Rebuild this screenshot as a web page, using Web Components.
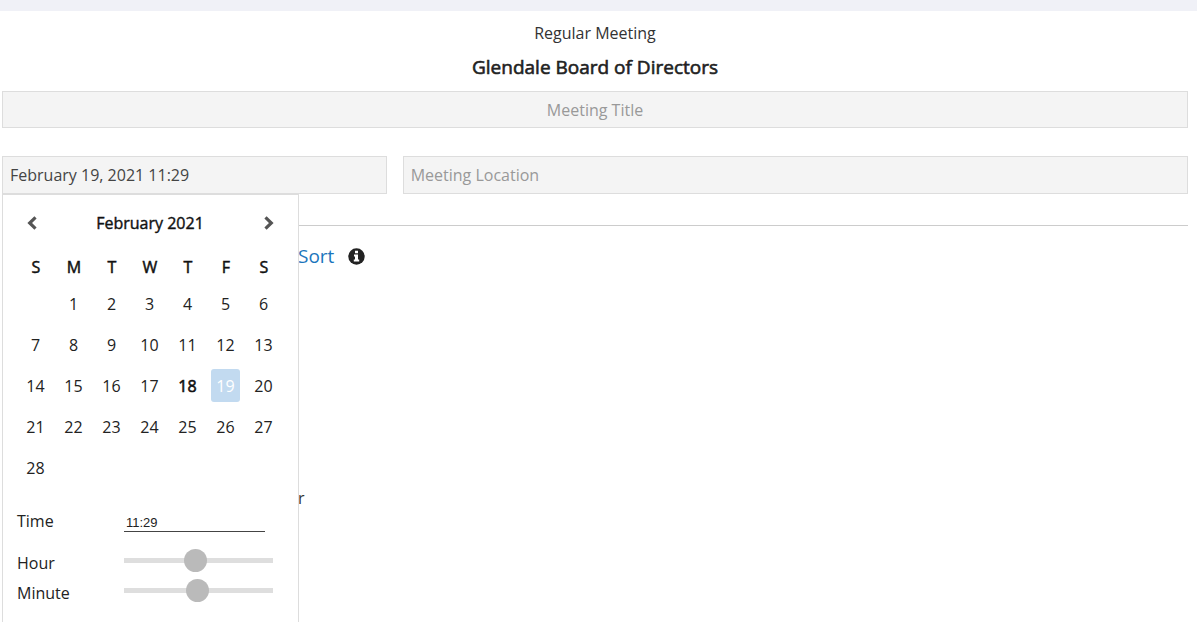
<!DOCTYPE html>
<html lang="en">
<head>
<meta charset="utf-8">
<title>Regular Meeting</title>
<style>
  html {
    overflow: hidden;
  }
  body {
    margin: 0;
    background: #fff;
    color: #333;
    font-family: "Open Sans", "Noto Sans", sans-serif;
    font-size: 16px;
    line-height: 24px;
  }
</style>
</head>
<body>
<meeting-page>
  <meeting-heading slot="heading" kind="Regular Meeting">Glendale Board of Directors</meeting-heading>
  <text-field slot="title" label="Meeting Title" centered></text-field>
  <date-field slot="details" value="February 19, 2021 11:29">
    <date-picker year="2021" month="2" selected="19" today="18" hour="11" minute="29"></date-picker>
  </date-field>
  <text-field slot="details" label="Meeting Location" tall></text-field>
  <agenda-tools slot="agenda">Sort</agenda-tools>
  <agenda-item slot="agenda">r</agenda-item>
</meeting-page>

<script>
class MeetingPage extends HTMLElement {
  constructor() {
    super();
    this.attachShadow({ mode: "open" });
    this.shadowRoot.innerHTML = `
    <style>
      :host {
        display: block;
        min-height: 100vh;
        box-sizing: border-box;
        border-top: 11px solid #f0f1f7;
      }
      main {
        display: flex;
        flex-direction: column;
        padding: 10px 9px 0 2px;
      }
      .details {
        display: flex;
        gap: 16px;
        margin-top: 28px;
      }
      ::slotted(date-field) {
        flex: 0 0 calc((100% + 16px) / 3 - 16px);
      }
      .details ::slotted(text-field) {
        flex: 1;
      }
      hr {
        width: 100%;
        margin: 31px 0 17px;
        border: 0;
        border-top: 1px solid #ccc;
      }
      .agenda {
        display: flex;
        flex-direction: column;
        gap: 217px;
        padding-left: 296px;
      }
    </style>
    <main>
      <slot name="heading"></slot>
      <slot name="title"></slot>
      <div class="details"><slot name="details"></slot></div>
      <hr>
      <div class="agenda"><slot name="agenda"></slot></div>
    </main>
    `;
  }
}

class MeetingHeading extends HTMLElement {
  constructor() {
    super();
    this.attachShadow({ mode: "open" });
    this.shadowRoot.innerHTML = `
    <style>
      :host {
        display: block;
        text-align: center;
        margin-bottom: 11px;
      }
      p {
        margin: 0;
      }
      h1 {
        margin: 9px 0 0;
        color: #222;
        font-size: 19px;
        line-height: 26px;
        font-weight: 400;
        -webkit-text-stroke: 0.6px currentColor;
      }
    </style>
    <p></p>
    <h1><slot></slot></h1>
    `;
  }

  connectedCallback() {
    this.shadowRoot.querySelector("p").textContent = this.getAttribute("kind");
  }
}

class TextField extends HTMLElement {
  constructor() {
    super();
    this.attachShadow({ mode: "open" });
    this.shadowRoot.innerHTML = `
    <style>
      :host {
        display: block;
      }
      input {
        display: block;
        width: 100%;
        height: 37px;
        box-sizing: border-box;
        margin: 0;
        padding: 0 7px;
        border: 1px solid #ddd;
        border-radius: 0;
        background: #f4f4f4;
        color: #444;
        font: inherit;
      }
      :host([centered]) input {
        text-align: center;
      }
      :host([tall]) input {
        height: 38px;
      }
      input::placeholder {
        color: #999;
        opacity: 1;
      }
    </style>
    <input type="text">
    `;
  }

  connectedCallback() {
    const input = this.shadowRoot.querySelector("input");
    input.placeholder = this.getAttribute("label");
    input.setAttribute("aria-label", this.getAttribute("label"));
  }
}

class DateField extends HTMLElement {
  constructor() {
    super();
    this.attachShadow({ mode: "open" });
    this.shadowRoot.innerHTML = `
    <style>
      :host {
        display: block;
        position: relative;
      }
      input {
        display: block;
        width: 100%;
        height: 38px;
        box-sizing: border-box;
        margin: 0;
        padding: 0 7px;
        border: 1px solid #ddd;
        border-radius: 0;
        background: #f4f4f4;
        color: #444;
        font: inherit;
      }
      ::slotted(date-picker) {
        position: absolute;
        top: 100%;
        left: 0;
        z-index: 10;
      }
    </style>
    <input type="text" aria-label="Meeting date">
    <slot></slot>
    `;
  }

  connectedCallback() {
    this.shadowRoot.querySelector("input").value = this.getAttribute("value");
  }
}

class DatePicker extends HTMLElement {
  constructor() {
    super();
    this.attachShadow({ mode: "open" });
    this.shadowRoot.innerHTML = `
    <style>
      :host {
        display: block;
        width: 297px;
        box-sizing: border-box;
        padding: 13px 15px 14px 14px;
        border: 1px solid #ddd;
        background: #fff;
        color: #222;
      }
      header {
        display: flex;
        align-items: center;
        justify-content: space-between;
        height: 30px;
      }
      h2 {
        margin: 0;
        color: #111;
        font-size: 16px;
        font-weight: 400;
        -webkit-text-stroke: 0.4px currentColor;
      }
      button {
        display: flex;
        align-items: center;
        justify-content: center;
        width: 29px;
        height: 33px;
        margin: 0 4px;
        padding: 0;
        border: 0;
        border-radius: 3px;
        background: none;
        color: inherit;
        font: inherit;
        cursor: pointer;
      }
      header button {
        margin: 0;
        color: #555;
      }
      table {
        width: 100%;
        margin-top: 13px;
        border-collapse: collapse;
        table-layout: fixed;
      }
      th {
        height: 32px;
        padding: 0;
        color: #111;
        font-weight: 400;
        -webkit-text-stroke: 0.5px currentColor;
      }
      td {
        height: 41px;
        padding: 0;
      }
      .today {
        color: #111;
        -webkit-text-stroke: 0.6px currentColor;
      }
      .selected {
        background: #c2daf0;
        color: #fff;
      }
      time-controls {
        margin-top: 18px;
      }
    </style>
    <header>
      <button type="button" aria-label="Previous month">
        <svg width="16" height="16" viewBox="0 0 16 16" fill="none" stroke="currentColor" stroke-width="3.2"><path d="M11.5 2.4 5.7 8l5.8 5.6"/></svg>
      </button>
      <h2></h2>
      <button type="button" aria-label="Next month">
        <svg width="16" height="16" viewBox="0 0 16 16" fill="none" stroke="currentColor" stroke-width="3.2"><path d="M5.5 2.4 11.3 8l-5.8 5.6"/></svg>
      </button>
    </header>
    <table>
      <thead><tr></tr></thead>
      <tbody></tbody>
    </table>
    <time-controls></time-controls>
    `;
  }

  connectedCallback() {
    const year = Number(this.getAttribute("year"));
    const month = Number(this.getAttribute("month")) - 1;
    const first = new Date(year, month, 1);
    const name = first.toLocaleString("en-US", { month: "long" });
    this.shadowRoot.querySelector("h2").textContent = name + " " + year;
    this.shadowRoot.querySelector("thead tr").innerHTML = [..."SMTWTFS"]
      .map((day) => `<th scope="col">${day}</th>`)
      .join("");
    this._renderDays(first.getDay(), new Date(year, month + 1, 0).getDate());

    const time = this.shadowRoot.querySelector("time-controls");
    time.setTime(this.getAttribute("hour"), this.getAttribute("minute"));
  }

  _renderDays(offset, count) {
    const body = this.shadowRoot.querySelector("tbody");
    let row;
    for (let i = 0; i < offset + count; i++) {
      if (i % 7 === 0) row = body.insertRow();
      const cell = row.insertCell();
      if (i < offset) continue;
      const day = String(i - offset + 1);
      const button = document.createElement("button");
      button.type = "button";
      button.textContent = day;
      if (day === this.getAttribute("today")) button.className = "today";
      if (day === this.getAttribute("selected")) button.className = "selected";
      cell.appendChild(button);
    }
  }
}

class TimeControls extends HTMLElement {
  constructor() {
    super();
    this.attachShadow({ mode: "open" });
    this.shadowRoot.innerHTML = `
    <style>
      :host {
        display: grid;
        grid-template-columns: 107px 1fr;
        grid-template-rows: 42px;
        grid-auto-rows: 30px;
        align-items: center;
        padding-right: 10px;
      }
      label[for="time"] {
        margin-bottom: 12px;
      }
      input {
        box-sizing: border-box;
        margin: 0;
      }
      input[type="text"] {
        width: 141px;
        height: 20px;
        margin-bottom: 10px;
        padding: 2px 2px 0;
        border: 0;
        border-bottom: 1px solid #444;
        background: none;
        color: #222;
        font: 13px/17px "Liberation Sans", Arial, sans-serif;
      }
      input[type="range"] {
        appearance: none;
        width: 100%;
        height: 23px;
        margin-bottom: 6px;
        background: none;
      }
      input::-webkit-slider-runnable-track {
        height: 5px;
        background: #dedede;
      }
      input::-webkit-slider-thumb {
        appearance: none;
        width: 23px;
        height: 23px;
        margin-top: -9px;
        border-radius: 50%;
        background: #bababa;
      }
    </style>
    <label for="time">Time</label>
    <input id="time" type="text">
    <label for="hour">Hour</label>
    <input id="hour" type="range" min="0" max="23">
    <label for="minute">Minute</label>
    <input id="minute" type="range" min="0" max="59">
    `;
    this._time = this.shadowRoot.querySelector("#time");
    this._hour = this.shadowRoot.querySelector("#hour");
    this._minute = this.shadowRoot.querySelector("#minute");
  }

  connectedCallback() {
    this._hour.addEventListener("input", this._updateTime.bind(this));
    this._minute.addEventListener("input", this._updateTime.bind(this));
  }

  setTime(hour, minute) {
    this._hour.value = hour;
    this._minute.value = minute;
    this._updateTime();
  }

  _updateTime() {
    this._time.value = this._hour.value + ":" + this._minute.value.padStart(2, "0");
  }
}

class AgendaTools extends HTMLElement {
  constructor() {
    super();
    this.attachShadow({ mode: "open" });
    this.shadowRoot.innerHTML = `
    <style>
      :host {
        display: flex;
        align-items: center;
        gap: 14px;
        height: 26px;
        font-size: 19px;
      }
      a {
        color: #1b75bc;
        text-decoration: none;
      }
      svg {
        display: block;
      }
    </style>
    <a href="#sort"><slot></slot></a>
    <svg width="17" height="17" viewBox="0 0 17 17" role="img" aria-label="Help">
      <circle cx="8.5" cy="8.5" r="8.2" fill="#222"/>
      <path fill="#fff" d="M7 2.8h3v2.4H7zM6 6.6h4v5h1.2v2H5.8v-2H7v-3H6z"/>
    </svg>
    `;
  }
}

class AgendaItem extends HTMLElement {
  constructor() {
    super();
    this.attachShadow({ mode: "open" });
    this.shadowRoot.innerHTML = `
    <style>
      :host {
        display: block;
      }
    </style>
    <slot></slot>
    `;
  }
}

// time-controls goes first, date-picker calls setTime on it
customElements.define("time-controls", TimeControls);
customElements.define("date-picker", DatePicker);
customElements.define("date-field", DateField);
customElements.define("text-field", TextField);
customElements.define("meeting-heading", MeetingHeading);
customElements.define("agenda-tools", AgendaTools);
customElements.define("agenda-item", AgendaItem);
customElements.define("meeting-page", MeetingPage);
</script>
</body>
</html>
